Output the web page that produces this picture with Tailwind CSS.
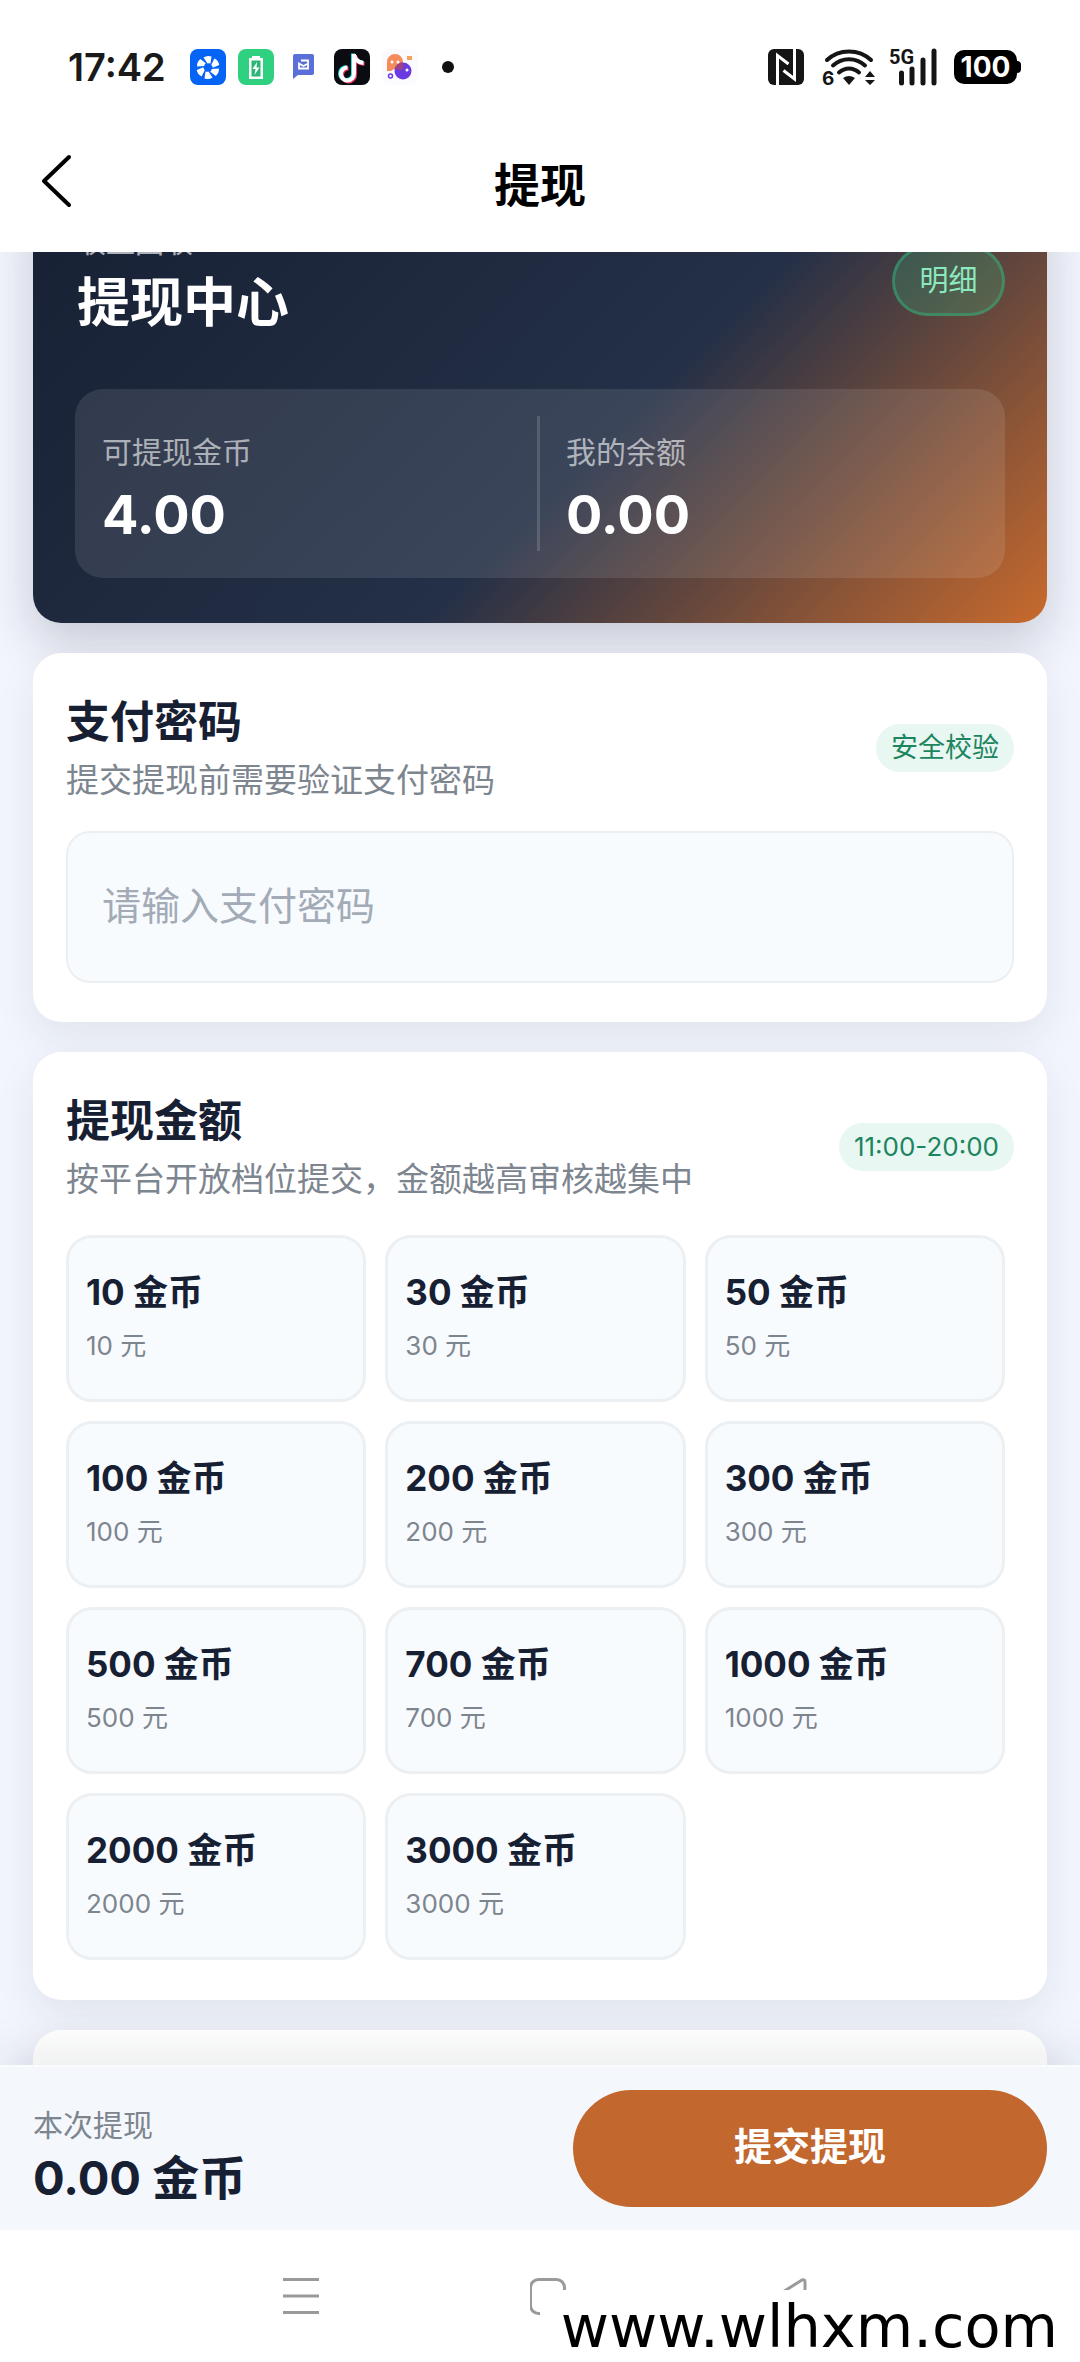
<!DOCTYPE html>
<html lang="zh-CN">
<head>
    <meta charset="UTF-8">
    <meta name="viewport" content="width=device-width, initial-scale=1.0">
    <title>提现</title>
    <script src="https://cdn.jsdelivr.net/npm/@tailwindcss/browser@4"></script>
</head>
<body class="h-screen flex flex-col overflow-hidden bg-[#f2f5fd] text-[#172033] font-['Inter','Noto_Sans_CJK_SC',sans-serif]">

    <!-- Status bar + title bar -->
    <header class="relative z-10 shrink-0 bg-white">
        <div class="h-[134px] pl-[68px] pr-[59px] flex items-center justify-between">
            <div class="flex items-center">
                <span class="text-[38px] leading-[46px] font-semibold text-[#1a1a1a]">17:42</span>
                <div class="ml-6 flex items-center gap-3">
                    <svg class="size-9" viewBox="0 0 36 36">
                        <rect width="36" height="36" rx="8" fill="#0563f5"/>
                        <g fill="#fff">
                            <path id="blade" d="M17.500 14.500L13.500 8.500Q17 6 21.500 7.500L20.500 14.500Q19 13.800 17.500 14.500Z"/>
                            <use href="#blade" transform="rotate(60 18 18.500)"/>
                            <use href="#blade" transform="rotate(120 18 18.500)"/>
                            <use href="#blade" transform="rotate(180 18 18.500)"/>
                            <use href="#blade" transform="rotate(240 18 18.500)"/>
                            <use href="#blade" transform="rotate(300 18 18.500)"/>
                        </g>
                    </svg>
                    <svg class="size-9" viewBox="0 0 36 36">
                        <rect width="36" height="36" rx="8" fill="#2fd07f"/>
                        <path d="M14 7h8v2h3v21H11V9h3z" fill="#fff"/>
                        <path d="M13.500 11.500h9v16h-9z" fill="#2cb574"/>
                        <path d="M19 13l-4.500 7h3l-1 6 5-7.500h-3z" fill="#fff"/>
                    </svg>
                    <svg class="size-9" viewBox="0 0 36 36">
                        <path d="M9 5h17a2 2 0 0 1 2 2v17a2 2 0 0 1-2 2H12l-5 4V7a2 2 0 0 1 2-2z" fill="#5b6fd8"/>
                        <path d="M15 11.500h7v8h-9v-5l4.500 2.500 4.500-2.500" fill="none" stroke="#fff" stroke-width="1.800"/>
                    </svg>
                    <svg class="size-9" viewBox="0 0 36 36">
                        <rect width="36" height="36" rx="8" fill="#0b0b12"/>
                        <g fill="none" stroke-width="4">
                            <path d="M19 4.500v19.500a6.500 6.500 0 1 1-6.500-6M19 5c1 5 4 8 9.500 8.500" stroke="#25e6e2"/>
                            <path d="M21 6v19.500a6.500 6.500 0 1 1-6.500-6M21 6.500c1 5 4 8 9.500 8.500" stroke="#f5315c"/>
                            <path d="M20 5v19.500a6.500 6.500 0 1 1-6.500-6M20 5.500c1 5 4 8 9.500 8.500" stroke="#fff"/>
                        </g>
                    </svg>
                    <svg class="size-9" viewBox="0 0 36 36">
                        <rect width="36" height="36" rx="8" fill="#fbfafc"/>
                        <path d="M5 22V13a8 8 0 0 1 16 0v9l-3-2-3 2-3-2-3 2z" fill="#f58a5b"/>
                        <circle cx="21" cy="22" r="8.500" fill="#6a3be0"/>
                        <path d="M13 19a8.500 8.500 0 0 1 8-5.500v6l-3 2-3-2z" fill="#a2417f"/>
                        <circle cx="10" cy="13" r="1.500" fill="#fff"/><circle cx="16" cy="13" r="1.500" fill="#fff"/>
                        <circle cx="25" cy="21" r="1.500" fill="#fff"/>
                        <circle cx="8.500" cy="27" r="2" fill="none" stroke="#6a3be0" stroke-width="1.500"/>
                        <path d="M25 7h5v4h-5z" fill="#f5a05b"/>
                    </svg>
                </div>
                <span class="ml-6 size-3 rounded-full bg-[#111]"></span>
            </div>

            <div class="flex items-center text-[#151515]">
                <svg class="size-9" viewBox="0 0 36 36">
                    <rect width="36" height="36" rx="6" fill="#151515"/>
                    <path d="M9.500 36V6.500L20.500 15M26.500 0V30L15.500 21.500" fill="none" stroke="#fff" stroke-width="3"/>
                </svg>
                <svg class="ml-[18px] w-[54px] h-9 overflow-visible" viewBox="0 0 54 36">
                    <g fill="none" stroke="#151515" stroke-width="4" stroke-linecap="round">
                        <path d="M5 11C17-.500 37-.500 49 11"/>
                        <path d="M11 16.500C20 8 34 8 43 16.500"/>
                        <path d="M17 23.500c6-5.500 14-5.500 20 0"/>
                    </g>
                    <path d="M27 36l-6-7q6-4 12 0zM48 22l5 6H43zM48 36l5-5H43z" fill="#151515"/>
                    <text x="0" y="36" font-family="Inter" font-size="19" font-weight="700" fill="#151515">6</text>
                </svg>
                <svg class="ml-[13px] w-12 h-9 overflow-visible" viewBox="0 0 48 36">
                    <text x="0" y="15" font-family="Roboto" font-size="20" font-weight="700" fill="#151515">5G</text>
                    <path d="M12.500 24v10M23 20v14M34 11v23M45 2v32" stroke="#151515" stroke-width="5" stroke-linecap="round"/>
                </svg>
                <div class="ml-[17px] flex items-center">
                    <span class="w-[63px] h-[34px] rounded-[10px] bg-black text-white text-[28px] leading-[34px] font-bold text-center">100</span>
                    <span class="w-1 h-3 rounded-r-sm bg-black"></span>
                </div>
            </div>
        </div>

        <div class="relative h-[118px] flex justify-center">
            <button type="button" aria-label="返回" class="absolute left-8 top-4 p-1">
                <svg class="w-12 h-[54px]" viewBox="0 0 48 54" fill="none" stroke="#000" stroke-width="4" stroke-linecap="round" stroke-linejoin="round">
                    <path d="M33 3L8 27l25 24"/>
                </svg>
            </button>
            <h1 class="pt-4 text-[46px] leading-[70px] font-bold text-black">提现</h1>
        </div>
    </header>

    <!-- Scrolled content -->
    <main class="flex-1 min-h-0 overflow-hidden px-[33px] flex flex-col gap-[30px]">
        <section class="-mt-[68px] shrink-0 px-[42px] pt-[42px] pb-[45px] rounded-[28px] bg-[linear-gradient(135deg,#172033_0%,#243047_57%,#c86a2d_100%)] shadow-[0_20px_50px_rgba(23,32,51,0.2)]">
            <div class="flex items-center justify-between">
                <div class="pl-0.5">
                    <p class="text-[29px] leading-[34px] text-white/65">收益回收</p>
                    <h2 class="mt-[10px] text-[53px] leading-[66px] font-bold text-white">提现中心</h2>
                </div>
                <button type="button" class="w-[113px] h-[70px] rounded-full border-3 border-[#34b27b]/50 bg-[#34b27b]/25 text-[29px] text-[#8ce8bf]">明细</button>
            </div>
            <div class="mt-[53px] px-[27px] py-[27px] rounded-[28px] bg-white/10 grid grid-cols-2">
                <div class="h-[135px] pt-[14px] border-r-3 border-white/15">
                    <p class="text-[30px] leading-[44px] text-white/60">可提现金币</p>
                    <p class="mt-1.5 text-[54px] leading-[70px] font-bold text-white">4.00</p>
                </div>
                <div class="h-[135px] pt-[14px] pl-[26px]">
                    <p class="text-[30px] leading-[44px] text-white/60">我的余额</p>
                    <p class="mt-1.5 text-[54px] leading-[70px] font-bold text-white">0.00</p>
                </div>
            </div>
        </section>

        <section class="shrink-0 px-[33px] py-[39px] rounded-[28px] bg-white shadow-[0_16px_40px_rgba(23,32,51,0.08)]">
            <div class="flex items-center justify-between">
                <div>
                    <h2 class="text-[44px] leading-[60px] font-bold"><label for="pay-password">支付密码</label></h2>
                    <p class="mt-1 text-[33px] leading-[48px] text-[#7d858f]">提交提现前需要验证支付密码</p>
                </div>
                <span class="px-[15px] rounded-full bg-[#e8f7f2] text-[27px] leading-[48px] text-[#1c8560]">安全校验</span>
            </div>
            <input id="pay-password" type="password" placeholder="请输入支付密码" class="mt-[27px] block w-full h-[152px] px-[34px] pb-1 rounded-[24px] border-2 border-[#eceff2] bg-[#f8fbfe] text-[39px] placeholder:text-[#a3abb7]">
        </section>

        <section class="shrink-0 px-[33px] pt-[39px] pb-10 rounded-[28px] bg-white shadow-[0_16px_40px_rgba(23,32,51,0.08)]">
            <div class="flex items-center justify-between">
                <div>
                    <h2 class="text-[44px] leading-[60px] font-bold">提现金额</h2>
                    <p class="mt-1 text-[33px] leading-[48px] text-[#7d858f]">按平台开放档位提交，金额越高审核越集中</p>
                </div>
                <span class="px-[15px] rounded-full bg-[#e8f7f2] text-[26px] leading-[48px] text-[#1c8560]">11:00-20:00</span>
            </div>
            <div id="amounts" class="mt-8 pr-[9px] grid grid-cols-3 gap-[19px]"></div>
        </section>

        <section class="shrink-0 h-[300px] rounded-[28px] bg-white shadow-[0_16px_40px_rgba(23,32,51,0.08)]"></section>
    </main>

    <!-- Submit bar -->
    <footer class="relative z-10 shrink-0 h-[165px] px-[33px] flex items-center justify-between border-t-2 border-[#f9fbfd] bg-[#f4f7fb] shadow-[0_-16px_40px_rgba(23,32,51,0.08)]">
        <div class="pt-4">
            <p class="text-[30px] leading-[42px] text-[#7d858f]">本次提现</p>
            <p class="text-[47px] leading-[64px] font-bold"><span id="total">0.00</span> 金币</p>
        </div>
        <button type="button" class="w-[474px] h-[117px] pb-1 rounded-full bg-[#c2682f] text-[38px] font-bold text-white">提交提现</button>
    </footer>

    <!-- System navigation -->
    <nav class="relative z-10 shrink-0 h-[132px] bg-white">
        <div class="pt-[46px] pl-[282px] flex gap-[208px]">
            <svg class="size-10" viewBox="0 0 40 40" stroke="#9a9a9a" stroke-width="3"><path d="M1 3.500h36M1 20h36M1 36.500h36"/></svg>
            <svg class="size-10" viewBox="0 0 40 40" fill="none" stroke="#9a9a9a" stroke-width="3"><rect x="0.500" y="3.500" width="34" height="34" rx="8"/></svg>
            <svg class="size-10" viewBox="0 0 40 40" fill="none" stroke="#9a9a9a" stroke-width="3" stroke-linejoin="round"><path d="M0 19L24 4q3-1 3 2v28q0 3-3 2z"/></svg>
        </div>
        <a href="#" class="absolute right-0 bottom-0 w-[540px] h-[72px] pr-[22px] bg-white text-right text-[59px] leading-[74px] text-black font-['DejaVu_Sans',sans-serif]">www.wlhxm.com</a>
    </nav>

    <script>
        const amounts = [10, 30, 50, 100, 200, 300, 500, 700, 1000, 2000, 3000];

        document.getElementById('amounts').innerHTML = amounts.map(n => `
            <button type="button" data-amount="${n}" class="h-[167px] px-[17px] rounded-[26px] border-3 border-[#edf0f3] bg-[#f8fbfe] text-left">
                <span class="block text-[35px] leading-[54px] font-bold">${n} 金币</span>
                <span class="block text-[26px] leading-[54px] text-[#7d858f]">${n} 元</span>
            </button>`).join('');

        document.getElementById('amounts').addEventListener('click', e => {
            const btn = e.target.closest('button');
            if (btn) document.getElementById('total').textContent = Number(btn.dataset.amount).toFixed(2);
        });
    </script>
</body>
</html>
